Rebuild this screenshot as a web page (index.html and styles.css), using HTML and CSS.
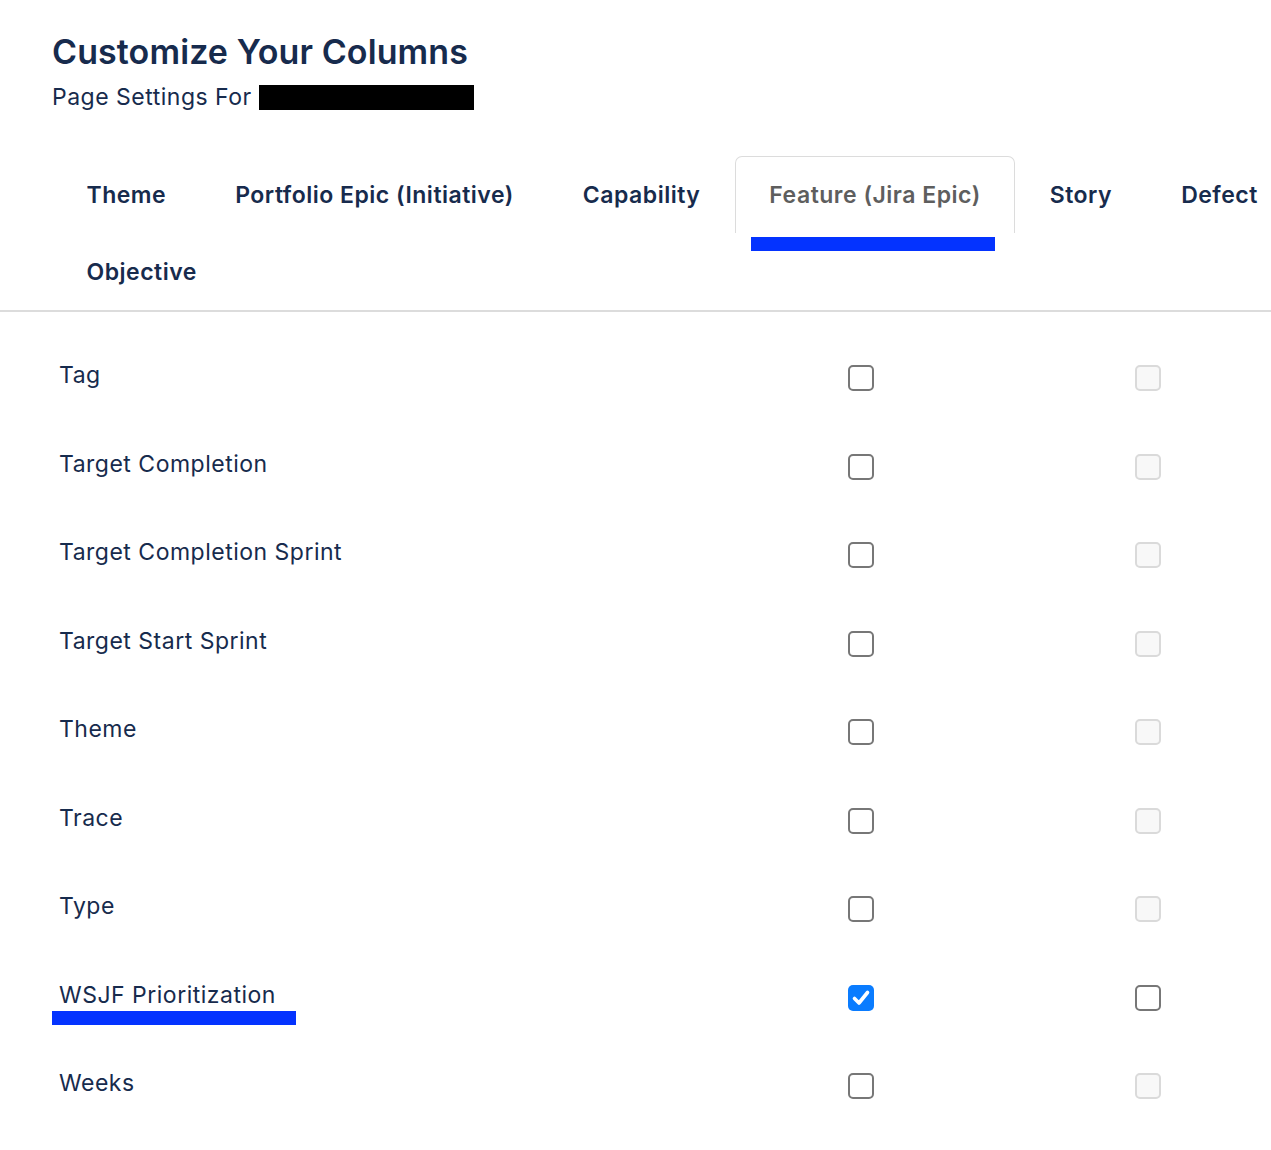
FILE: index.html
```html
<!DOCTYPE html>
<html>
<head>
<meta charset="utf-8">
<link rel="stylesheet" href="styles.css">
</head>
<body>
<div class="page">
  <header class="header">
    <h1 class="title">Customize Your Columns</h1>
    <div class="subtitle">Page Settings For <span class="redacted"></span></div>
  </header>
  <nav class="tabs">
    <ul class="tab-list">
      <li class="tab">Theme</li>
      <li class="tab">Portfolio Epic (Initiative)</li>
      <li class="tab">Capability</li>
      <li class="tab active">Feature (Jira Epic)<span class="mark mark-tab"></span></li>
      <li class="tab">Story</li>
      <li class="tab">Defect</li>
      <li class="tab">Objective</li>
    </ul>
  </nav>
  <section class="rows">
    <div class="row"><span class="label">Tag</span><span class="cell"><span class="cb"></span></span><span class="cell"><span class="cb disabled"></span></span></div>
    <div class="row"><span class="label">Target Completion</span><span class="cell"><span class="cb"></span></span><span class="cell"><span class="cb disabled"></span></span></div>
    <div class="row"><span class="label">Target Completion Sprint</span><span class="cell"><span class="cb"></span></span><span class="cell"><span class="cb disabled"></span></span></div>
    <div class="row"><span class="label">Target Start Sprint</span><span class="cell"><span class="cb"></span></span><span class="cell"><span class="cb disabled"></span></span></div>
    <div class="row"><span class="label">Theme</span><span class="cell"><span class="cb"></span></span><span class="cell"><span class="cb disabled"></span></span></div>
    <div class="row"><span class="label">Trace</span><span class="cell"><span class="cb"></span></span><span class="cell"><span class="cb disabled"></span></span></div>
    <div class="row"><span class="label">Type</span><span class="cell"><span class="cb"></span></span><span class="cell"><span class="cb disabled"></span></span></div>
    <div class="row"><span class="label">WSJF Prioritization<span class="mark mark-label"></span></span><span class="cell"><span class="cb checked"><svg viewBox="0 0 26 26" width="26" height="26"><path d="M6.5 13.5 L11 18 L19.5 7.5" fill="none" stroke="#fff" stroke-width="3.6" stroke-linecap="round" stroke-linejoin="round"/></svg></span></span><span class="cell"><span class="cb"></span></span></div>
    <div class="row"><span class="label">Weeks</span><span class="cell"><span class="cb"></span></span><span class="cell"><span class="cb disabled"></span></span></div>
  </section>
</div>
</body>
</html>
```

FILE: styles.css
```css
html, body {
  margin: 0;
  padding: 0;
  background: #fff;
  overflow: hidden;
}
body {
  font-family: Inter, "Noto Sans", "Liberation Sans", sans-serif;
  color: #172b4d;
}
.page {
  width: 1271px;
}
.header {
  padding: 31px 0 0 52px;
}
.title {
  margin: 0;
  font-size: 34px;
  font-weight: 600;
  line-height: 42px;
  letter-spacing: 0.1px;
}
.subtitle {
  font-size: 23px;
  letter-spacing: 0.5px;
  line-height: 30px;
  margin-top: 9px;
  display: flex;
  align-items: center;
}
.redacted {
  display: inline-block;
  width: 215px;
  height: 25px;
  background: #000;
  margin-left: 7px;
}
.tabs {
  margin-top: 44px;
  width: 1271px;
  border-bottom: 2px solid #dcdcdc;
}
.tab-list {
  list-style: none;
  margin: 0;
  padding: 0 0 0 52px;
  width: 1400px;
  display: flex;
  flex-wrap: wrap;
}
.tab {
  position: relative;
  height: 77px;
  box-sizing: border-box;
  padding: 0 33.5px;
  display: flex;
  align-items: center;
  font-size: 23px;
  letter-spacing: 0.5px;
  font-weight: 600;
  border: 1.5px solid transparent;
  border-bottom: none;
  border-radius: 7px 7px 0 0;
}
.tab.active {
  border-color: #dcdcdc;
  color: #5e5e5e;
}
.mark {
  position: absolute;
  background: #0433ff;
  height: 14px;
}
.mark-tab {
  left: 15px;
  top: 80px;
  width: 244px;
}
.rows {
  padding: 22px 0 0 59px;
}
.row {
  display: grid;
  grid-template-columns: 789px 287px 100px;
  align-items: center;
  height: 88.5px;
}
.label {
  position: relative;
  font-size: 23px;
  letter-spacing: 0.5px;
  line-height: 30px;
  margin-top: -6px;
}
.mark-label {
  left: -7px;
  top: 31px;
  width: 244px;
}
.cell {
  display: flex;
}
.cb {
  width: 26px;
  height: 26px;
  box-sizing: border-box;
  border: 2px solid #777;
  border-radius: 5px;
  background: #fff;
  display: block;
}
.cb.disabled {
  border-color: #dadada;
  background: #f8f8f8;
}
.cb.checked {
  border: none;
  background: #0a7cff;
}
.cb svg {
  display: block;
}
```
